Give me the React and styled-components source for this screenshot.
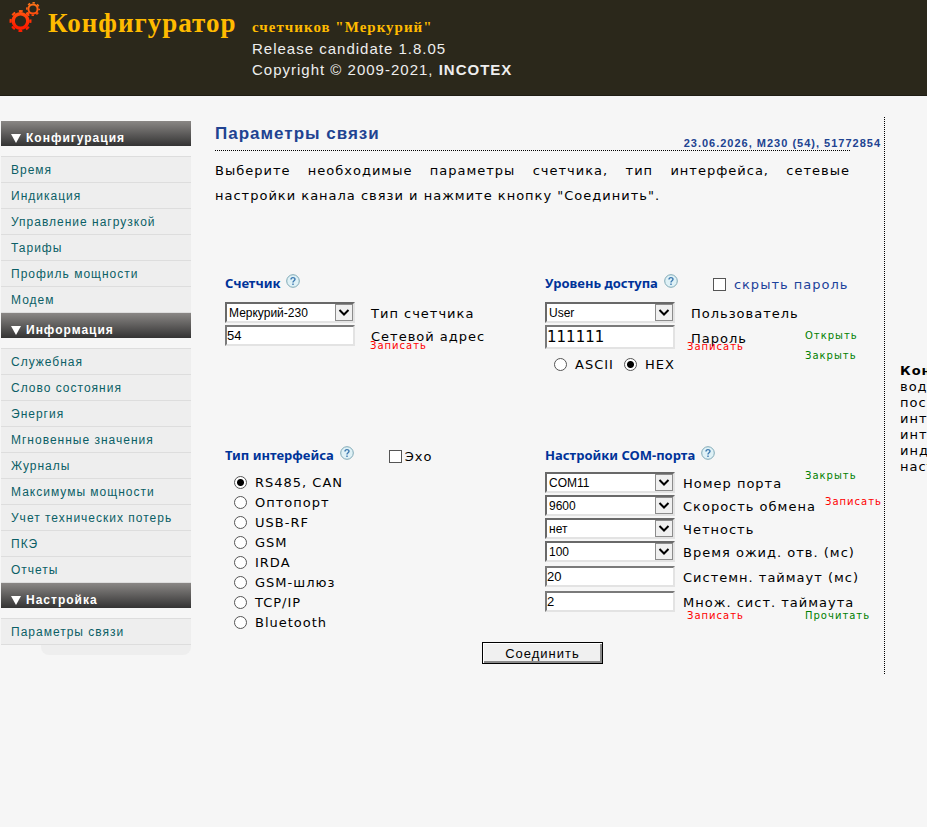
import React, { useState } from 'react';
import styled, { createGlobalStyle } from 'styled-components';

const arial = `"Liberation Sans", Arial, sans-serif`;
const verdana = `"DejaVu Sans", Verdana, sans-serif`;

const GlobalStyle = createGlobalStyle`
* {
    box-sizing: border-box;
}

body {
    margin: 0;
    background: #f6f6f6;
    color: #000;
    font-family: ${verdana};
    font-size: 13px;
    letter-spacing: 1px;
    overflow-x: hidden;
}
`

const Header = styled.header`
display: flex;
height: 96px;
padding: 2px 8px;
background: #2b281b;
border-bottom: 1px solid #1f1d14;
color: #eee;
font-family: ${arial};
`

const Brand = styled.h1`
margin: 0 0 0 8px;
width: 204px;
color: #fb0;
font: bold 27px/42px "Liberation Serif", "Times New Roman", serif;
`

const About = styled.div`
padding-top: 15px;
font-size: 15px;
line-height: 21px;
`

const Product = styled.div`
color: #fb0;
font: bold 15px/21px "Liberation Serif", "Times New Roman", serif;
`

const Page = styled.div`
display: grid;
grid-template-columns: 191px minmax(0, 1fr) 42px;
align-items: start;
padding-top: 21px;
`

const Sidebar = styled.nav`
padding: 4px 0 0 1px;
font-family: ${arial};
font-size: 12px;

ul {
    margin: 10px 0 0;
    padding: 0;
    list-style: none;
    border-top: 1px solid #ddd;
}
`

const MenuTitle = styled.h2`
display: flex;
align-items: flex-end;
gap: 5px;
margin: 0;
height: 25px;
padding: 0 10px;
background: linear-gradient(#8a8785, #333);
color: #fff;
font-size: 12px;
line-height: 15px;

svg {
    margin-bottom: 3px;
}
`

const MenuItem = styled.li`
background: #eee;
border-bottom: 1px solid #ddd;

a {
    display: block;
    padding: 2px 10px 0;
    color: #0b5f66;
    line-height: 23px;
    text-decoration: none;
    white-space: nowrap;
}
`

const MenuFoot = styled.div`
height: 10px;
margin-left: 40px;
background: #eee;
border-radius: 0 0 8px 8px;
`

const Main = styled.main`
padding: 0 0 10px 24px;
border-right: 1px dotted #000;
`

const TitleBar = styled.div`
display: flex;
justify-content: space-between;
align-items: flex-end;
height: 34px;
margin-right: 34px;
border-bottom: 1px dotted #000;
color: #214391;
font-family: ${arial};
`

const Title = styled.h2`
margin: 0;
font-size: 17px;
line-height: 32px;
`

const Status = styled.div`
margin-right: -31px;
font-size: 11px;
font-weight: bold;
line-height: 14px;
white-space: nowrap;
`

const Intro = styled.p`
margin: 7px 34px 66px 0;
line-height: 25px;
text-align: justify;
`

const Sections = styled.form`
display: grid;
grid-template-columns: 320px minmax(0, 1fr);
grid-template-rows: 172px auto;
padding-left: 10px;
`

const SectionHead = styled.div`
display: flex;
align-items: center;
height: 20px;
margin-bottom: ${props => props.$gap}px;

h3 {
    margin: 0 6px 0 0;
    padding-bottom: 2px;
    color: #039;
    font: bold 13px/18px "Noto Sans", Tahoma, sans-serif;
    letter-spacing: 0;
}
`

const HelpButton = styled.button`
display: flex;
margin: 0;
padding: 0 0 6px;
border: 0;
background: none;
`

const WithActions = styled.div`
display: grid;
grid-template-columns: 260px 1fr;
align-items: start;
white-space: nowrap;
`

const Row = styled.div`
display: grid;
grid-template-columns: ${props => props.$label}px auto;
align-items: center;
margin-bottom: ${props => props.$space ?? 2}px;
white-space: nowrap;

label {
    padding-top: 2px;
    line-height: 19px;
}
`

const SelectBox = styled.span`
display: flex;
width: 130px;
height: 21px;
border: 2px solid;
border-color: #696969 #e3e3e3 #e3e3e3 #696969;
background: #fff;

select {
    flex: 1;
    min-width: 0;
    padding: 0 2px;
    border: 0;
    background: none;
    appearance: none;
    font: 12px ${arial};
}

svg {
    flex: none;
    border: 1px solid #8c8c8c;
    background: #f0f0f0;
    margin-left: -18px;
    pointer-events: none;
}
`

const TextInput = styled.input`
width: 130px;
height: ${props => props.$big ? 24 : 21}px;
padding: 0 0 1px;
border: 2px solid;
border-color: #7a7a7a #e3e3e3 #e3e3e3 #7a7a7a;
background: #fff;
font-family: ${props => props.$big ? verdana : arial};
font-size: ${props => props.$big ? 15 : 13}px;
`

const Choice = styled.label`
display: flex;
align-items: center;
gap: 8px;
height: 20px;

input {
    flex: none;
    width: 13px;
    height: 13px;
    margin: 0;
    appearance: none;
    border: 1px solid #555;
    background: #fff;
}

input[type='radio'] {
    border-radius: 50%;
}

input[type='radio']:checked {
    background: radial-gradient(circle, #000 0 3px, #fff 4px);
}

input[type='checkbox']:checked {
    background: #000;
    box-shadow: inset 0 0 0 2px #fff;
}
`

const HidePassword = styled(Choice)`
margin-left: 35px;
color: #1c429b;
`

const Echo = styled(Choice)`
gap: 3px;
margin-left: 35px;
`

const Interfaces = styled.div`
padding-left: 9px;
`

const Encoding = styled.div`
display: flex;
gap: 10px;
padding: 1px 0 0 9px;
`

const Action = styled.button`
margin: 0;
padding: 0;
border: 0;
background: none;
color: ${props => props.$write ? '#f00' : '#008000'};
font: 10px/12px ${verdana};
letter-spacing: 1px;
text-align: left;
cursor: pointer;
`

// sits tight under the last field, partly over its label
const ActionRow = styled.div`
display: grid;
grid-template-columns: 118px auto;
justify-content: start;
margin-top: ${props => props.$lift}px;
padding-left: ${props => props.$indent}px;
`

const SideActions = styled.div`
display: flex;
flex-direction: column;
align-items: flex-start;
gap: ${props => props.$gap}px;
margin-top: ${props => props.$top}px;

${Action}[data-inset] {
    margin-left: 20px;
}
`

const Submit = styled.button`
display: block;
width: 121px;
height: 22px;
margin: 10px auto 0 257px;
padding: 0;
border: 1px solid #000;
background: #f0f0f0;
box-shadow: inset 1px 1px #fff, inset -2px -2px #8a8a8a;
color: #000;
font: 13px ${arial};
letter-spacing: 1px;
grid-column: 1 / -1;
`

const Aside = styled.aside`
padding: 246px 0 0 15px;
overflow: hidden;
line-height: 16px;
white-space: nowrap;
`

const menu = [
    { title: 'Конфигурация', items: ['Время', 'Индикация', 'Управление нагрузкой', 'Тарифы', 'Профиль мощности', 'Модем'] },
    { title: 'Информация', items: ['Служебная', 'Слово состояния', 'Энергия', 'Мгновенные значения', 'Журналы', 'Максимумы мощности', 'Учет технических потерь', 'ПКЭ', 'Отчеты'] },
    { title: 'Настройка', items: ['Параметры связи'] },
]

const interfaces = ['RS485, CAN', 'Оптопорт', 'USB-RF', 'GSM', 'IRDA', 'GSM-шлюз', 'TCP/IP', 'Bluetooth']

const Gear = ({ cx, cy, hole, body, tip }) => {
    const ring = (hole + body) / 2
    const teeth = (body + tip) / 2
    const step = (Math.PI * teeth) / 8
    return (
        <g fill="none" stroke="url(#fire)">
            <circle cx={cx} cy={cy} r={ring} strokeWidth={body - hole + 0.4} />
            <circle cx={cx} cy={cy} r={teeth} strokeWidth={tip - body} strokeDasharray={`${step} ${step}`} strokeDashoffset={step / 2} />
        </g>
    )
}

const Logo = () => (
    <svg width="32" height="32" viewBox="0 0 32 32" aria-hidden="true">
        <defs>
            <linearGradient id="fire" gradientUnits="userSpaceOnUse" x1="0" y1="0" x2="0" y2="30">
                <stop offset="0" stopColor="#ff7a1a" />
                <stop offset="0.8" stopColor="#ff1e00" />
            </linearGradient>
        </defs>
        <Gear cx={12.5} cy={19} hole={5.8} body={8.8} tip={11} />
        <Gear cx={25} cy={7} hole={3.8} body={5.4} tip={7} />
    </svg>
)

const Help = ({ about }) => (
    <HelpButton type="button" aria-label={`Справка: ${about}`}>
        <svg width="14" height="14" viewBox="0 0 14 14">
            <circle cx="7" cy="7" r="6.3" fill="#dff1f6" stroke="#7fa9b6" />
            <path d="M5 5.4C5 3 9 3 9 5.3C9 6.7 7 6.7 7 8.4M7 9.6V11" fill="none" stroke="#3c78b0" strokeWidth="1.4" />
        </svg>
    </HelpButton>
)

const SelectField = ({ id, label, value, offset, space }) => (
    <Row $label={offset} $space={space}>
        <SelectBox>
            <select id={id} defaultValue={value}>
                <option>{value}</option>
            </select>
            <svg width="18" height="17" viewBox="0 0 16 15">
                <path d="M3.5 5L8 9.5L12.5 5" fill="none" stroke="#000" strokeWidth="2" />
            </svg>
        </SelectBox>
        <label htmlFor={id}>{label}</label>
    </Row>
)

const TextField = ({ id, label, value, offset, space, big }) => (
    <Row $label={offset} $space={space}>
        <TextInput id={id} defaultValue={value} $big={big} />
        <label htmlFor={id}>{label}</label>
    </Row>
)

const App = () => {
    const [link, setLink] = useState('RS485, CAN')
    const [encoding, setEncoding] = useState('HEX')

    return (
        <>
            <GlobalStyle />
            <Header>
                <Logo />
                <Brand>Конфигуратор</Brand>
                <About>
                    <Product>счетчиков "Меркурий"</Product>
                    <div>Release candidate 1.8.05</div>
                    <div>Copyright © 2009-2021, <b>INCOTEX</b></div>
                </About>
            </Header>
            <Page>
                <Sidebar>
                    {menu.map(group => (
                        <React.Fragment key={group.title}>
                            <MenuTitle>
                                <svg width="10" height="9" viewBox="0 0 10 9"><path d="M0 0H10L5 9Z" fill="#fff" /></svg>
                                {group.title}
                            </MenuTitle>
                            <ul>
                                {group.items.map(item => <MenuItem key={item}><a href="#">{item}</a></MenuItem>)}
                            </ul>
                        </React.Fragment>
                    ))}
                    <MenuFoot />
                </Sidebar>
                <Main>
                    <TitleBar>
                        <Title>Параметры связи</Title>
                        <Status>23.06.2026, M230 (54), 51772854</Status>
                    </TitleBar>
                    <Intro>
                        Выберите необходимые параметры счетчика, тип интерфейса, сетевые настройки канала связи и нажмите кнопку "Соединить".
                    </Intro>
                    <Sections onSubmit={e => e.preventDefault()}>
                        <section>
                            <SectionHead $gap={8}>
                                <h3>Счетчик</h3>
                                <Help about="Счетчик" />
                            </SectionHead>
                            <SelectField id="meter" label="Тип счетчика" value="Меркурий-230" offset={146} />
                            <TextField id="address" label="Сетевой адрес" value="54" offset={146} space={0} />
                            <ActionRow $lift={-6} $indent={145}>
                                <Action type="button" $write>Записать</Action>
                            </ActionRow>
                        </section>
                        <section>
                            <SectionHead $gap={8}>
                                <h3>Уровень доступа</h3>
                                <Help about="Уровень доступа" />
                                <HidePassword><input type="checkbox" />скрыть пароль</HidePassword>
                            </SectionHead>
                            <WithActions>
                                <div>
                                    <SelectField id="user" label="Пользователь" value="User" offset={146} />
                                    <TextField id="password" label="Пароль" value="111111" offset={146} space={0} big />
                                    <ActionRow $lift={-8} $indent={142}>
                                        <Action type="button" $write>Записать</Action>
                                    </ActionRow>
                                    <Encoding>
                                        {['ASCII', 'HEX'].map(name => (
                                            <Choice key={name}>
                                                <input type="radio" name="encoding" checked={encoding === name} onChange={() => setEncoding(name)} />
                                                {name}
                                            </Choice>
                                        ))}
                                    </Encoding>
                                </div>
                                <SideActions $top={28} $gap={8}>
                                    <Action type="button">Открыть</Action>
                                    <Action type="button">Закрыть</Action>
                                </SideActions>
                            </WithActions>
                        </section>
                        <section>
                            <SectionHead $gap={6}>
                                <h3>Тип интерфейса</h3>
                                <Help about="Тип интерфейса" />
                                <Echo><input type="checkbox" />Эхо</Echo>
                            </SectionHead>
                            <Interfaces>
                                {interfaces.map(name => (
                                    <Choice key={name}>
                                        <input type="radio" name="link" checked={link === name} onChange={() => setLink(name)} />
                                        {name}
                                    </Choice>
                                ))}
                            </Interfaces>
                        </section>
                        <section>
                            <SectionHead $gap={6}>
                                <h3>Настройки COM-порта</h3>
                                <Help about="Настройки COM-порта" />
                            </SectionHead>
                            <WithActions>
                                <div>
                                    <SelectField id="port" label="Номер порта" value="COM11" offset={138} />
                                    <SelectField id="speed" label="Скорость обмена" value="9600" offset={138} />
                                    <SelectField id="parity" label="Четность" value="нет" offset={138} />
                                    <SelectField id="wait" label="Время ожид. отв. (мс)" value="100" offset={138} space={4} />
                                    <TextField id="timeout" label="Системн. таймаут (мс)" value="20" offset={138} space={4} />
                                    <TextField id="factor" label="Множ. сист. таймаута" value="2" offset={138} space={0} />
                                </div>
                                <SideActions $top={-2} $gap={14}>
                                    <Action type="button">Закрыть</Action>
                                    <Action type="button" $write data-inset>Записать</Action>
                                </SideActions>
                            </WithActions>
                            <ActionRow $lift={-2} $indent={142}>
                                <Action type="button" $write>Записать</Action>
                                <Action type="button">Прочитать</Action>
                            </ActionRow>
                        </section>
                        <Submit>Соединить</Submit>
                    </Sections>
                </Main>
                <Aside>
                    <b>Конф</b>
                    <div>води</div>
                    <div>поср</div>
                    <div>инте</div>
                    <div>инте</div>
                    <div>инди</div>
                    <div>наст</div>
                </Aside>
            </Page>
        </>
    );
}

export default App;
